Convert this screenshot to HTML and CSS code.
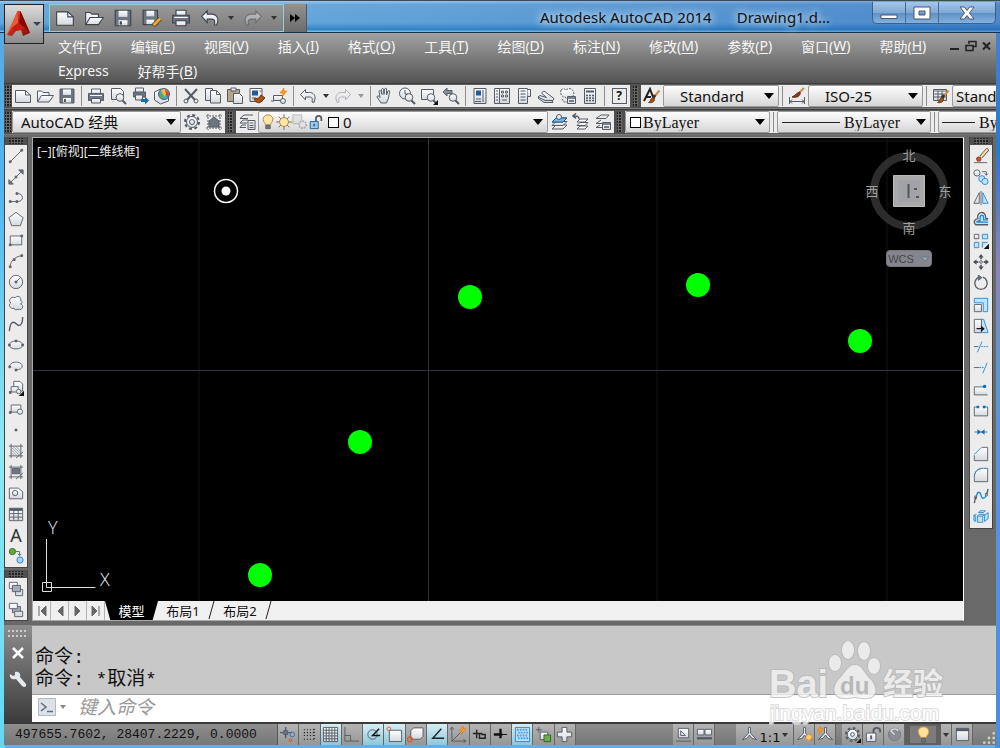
FILE: index.html
```html
<!DOCTYPE html>
<html lang="zh-CN">
<head>
<meta charset="utf-8">
<title>Autodesk AutoCAD 2014 - Drawing1.dwg</title>
<link rel="stylesheet" href="styles.css">
</head>
<body>
<svg class="sprite" aria-hidden="true">
  <defs>
    <linearGradient id="face" x1="0" y1="0" x2="0" y2="1"><stop offset="0" stop-color="#fff"/><stop offset="1" stop-color="#d4d8de"/></linearGradient>
    <linearGradient id="red" x1="0" y1="0" x2="1" y2="1"><stop offset="0" stop-color="#f04a30"/><stop offset="1" stop-color="#8a0c06"/></linearGradient>
  </defs>
  <symbol id="new" viewBox="0 0 18 18"><path class="f" d="M1.500 3.500h10l5 4.500v7.500h-15z"/><path d="M11.500 3.500v4.500h5"/></symbol>
  <symbol id="open" viewBox="0 0 18 18"><path class="f" d="M1.500 15v-11h4l1.500 1.500h6v3"/><path class="f" d="M1.500 15l4-6.500h12l-4.500 6.500z"/></symbol>
  <symbol id="save" viewBox="0 0 18 18"><path class="s" d="M2 2h14v14h-14z"/><path class="f n" d="M5 2.500h8v5.500h-8z"/><path class="f n" d="M5 11h8v4.500h-8z"/><path d="M7 12v3" stroke-width="2"/></symbol>
  <symbol id="saveas" viewBox="0 0 18 18"><path class="s" d="M1 2h13v13h-13z"/><path class="f n" d="M4 2.500h7v5h-7z"/><path class="f n" d="M4 10.500h7v4h-7z"/><path d="M10 16l6.500-6.500" stroke="#5a4a20" stroke-width="4"/><path d="M10.500 15.500l6-6" stroke="#f0a830" stroke-width="2.500"/></symbol>
  <symbol id="print" viewBox="0 0 18 18"><path class="f" d="M4.500 7v-5h9v5"/><path class="s" d="M1.500 6.500h15v7h-15z"/><path d="M3 8.500h12" stroke="#fff"/><path class="f" d="M4.500 11.500h9v4.500h-9z"/></symbol>
  <symbol id="undo" viewBox="0 0 18 18"><path class="f" d="M1.500 7.500l5-5v3h4c4 0 6 3 5.500 6.500l-1 3.500c-.5 0-1 0-2-.5.500-3 .5-5-2.500-5h-4v3z"/></symbol>
  <symbol id="redo" viewBox="0 0 18 18"><path class="f" d="M16.500 7.500l-5-5v3h-4c-4 0-6 3-5.500 6.500l1 3.500c.5 0 1 0 2-.5-.5-3-.5-5 2.500-5h4v3z"/></symbol>
  <symbol id="layers" viewBox="0 0 18 18"><path class="f" d="M2 16l4-4h11l-4 4z"/><path class="f" d="M2 12.500l4-4h11l-4 4z"/><path class="f" d="M2 9l4-4h11l-4 4z"/></symbol>
  <symbol id="lens" viewBox="0 0 18 18"><circle class="f" cx="11" cy="10.500" r="3.800"/><path d="M13.500 13.500l3.500 3.500" stroke-width="2"/></symbol>
  <symbol id="brush" viewBox="0 0 18 18"><path d="M16.500 3.500l-5 6" stroke="#d08a48" stroke-width="2"/><path d="M12 8l-2 3" stroke="#333" stroke-width="3"/><path d="M11.500 11.500c0 4-3 4.500-6 4 2-1 2-3.500 4-5z" fill="#a95416" stroke="#6e330c"/></symbol>
  <symbol id="person" viewBox="0 0 18 18"><path class="f" d="M8 1.500h2v6l6.500 7-5-1.500-2.500-3.500-2.500 3.500-5 1.500 6.500-7z"/></symbol>
</svg>

<div class="window">
  <header class="titlebar">
    <button class="appbtn" aria-label="应用程序菜单">
      <svg class="logo" viewBox="0 0 24 26"><path fill="url(#red)" d="M10.500 0h3l9.500 22-7 3-2-6-5 1-4 5-5-1z"/><path fill="#f0583a" d="M10.500 0l.5 12-5.500 4-5.500 8z"/><path fill="#8a0804" d="M13.500 0l-1.500 12 6 5 5 5z"/><path fill="#c81d10" d="M11 12l7 5-5 2-4 1-4-3z"/></svg>
      <i class="tri blue"></i>
    </button>
    <div class="qat">
      <button aria-label="新建"><svg class="i"><use href="#new"/></svg></button>
      <button aria-label="打开"><svg class="i"><use href="#open"/></svg></button>
      <button aria-label="保存"><svg class="i"><use href="#save"/></svg></button>
      <button aria-label="另存为"><svg class="i"><use href="#saveas"/></svg></button>
      <button aria-label="打印"><svg class="i"><use href="#print"/></svg></button>
      <button aria-label="放弃"><svg class="i"><use href="#undo"/></svg></button>
      <button class="drop" aria-label="放弃列表"><i class="tri small"></i></button>
      <button aria-label="重做"><svg class="i dim"><use href="#redo"/></svg></button>
      <button class="drop" aria-label="重做列表"><i class="tri small"></i></button>
    </div>
    <button class="qatmore" aria-label="更多"><i></i><i></i></button>
    <h1 class="title"><span>Autodesk AutoCAD 2014</span><span>Drawing1.d...</span></h1>
    <div class="winbtns">
      <button aria-label="最小化"><svg viewBox="0 0 18 14"><path class="wb" d="M1 9h16v3.500h-16z"/></svg></button>
      <button aria-label="最大化"><svg viewBox="0 0 18 14"><path class="wb" fill-rule="evenodd" d="M1 1h16v12h-16zM6 5v4h6v-4z"/></svg></button>
      <button class="close" aria-label="关闭"><svg viewBox="0 0 18 14"><path class="wb" d="M2 1h4.500l2.500 3.500 2.500-3.500h4.500l-4.500 6 4.500 6h-4.500l-2.500-3.500-2.500 3.500h-4.500l4.500-6z"/></svg></button>
    </div>
  </header>

  <div class="menubar">
    <nav class="menus">
      <button>文件(<u>F</u>)</button><button>编辑(<u>E</u>)</button><button>视图(<u>V</u>)</button><button>插入(<u>I</u>)</button><button>格式(<u>O</u>)</button><button>工具(<u>T</u>)</button><button>绘图(<u>D</u>)</button><button>标注(<u>N</u>)</button><button>修改(<u>M</u>)</button><button>参数(<u>P</u>)</button><button>窗口(<u>W</u>)</button><button>帮助(<u>H</u>)</button><button>E<u>x</u>press</button><button>好帮手(<u>B</u>)</button>
    </nav>
    <div class="docbtns">
      <button aria-label="最小化文档"><svg viewBox="0 0 12 12"><path d="M1 9h9" stroke-width="2"/></svg></button>
      <button aria-label="还原文档"><svg viewBox="0 0 12 12"><path d="M4 4v-2.500h7v5h-3M1 5.500h7v5h-7zM4 1.500h7M1 5.500h7" stroke-width="1.500"/></svg></button>
      <button aria-label="关闭文档"><svg viewBox="0 0 12 12"><path d="M2 2.500l7 7M9 2.500l-7 7" stroke-width="2"/></svg></button>
    </div>
  </div>

  <div class="toolrow">
    <span class="grip"></span>
    <div class="bar">
      <button aria-label="新建"><svg class="i"><use href="#new"/></svg></button>
      <button aria-label="打开"><svg class="i"><use href="#open"/></svg></button>
      <button aria-label="保存"><svg class="i"><use href="#save"/></svg></button>
      <span class="sep"></span>
      <button aria-label="打印"><svg class="i"><use href="#print"/></svg></button>
      <button aria-label="预览"><svg class="i" viewBox="0 0 18 18"><path class="f" d="M2.500 1.500h9l3 3v8h-12z"/><path d="M4 12v2.500" stroke-dasharray="1 1"/><use href="#lens"/></svg></button>
      <button aria-label="发布"><svg class="i" viewBox="0 0 18 18"><path class="f" d="M4.500 5v-4h8v4"/><path class="s" d="M2.500 5h12v5h-12z"/><path class="f" d="M4.500 8h7v5h-7z"/><path fill="#1769b5" stroke="none" d="M10 12h4v-2.500l4 4-4 4v-2.500h-4z"/></svg></button>
      <button aria-label="三维打印"><svg class="i" viewBox="0 0 18 18"><path class="f" d="M1.500 5l6-3 8 3v9l-8 3-6-4z"/><circle cx="11" cy="7" r="5.500" fill="#4a9fe0"/><path fill="#f5c02c" stroke="none" d="M8 3l4-1 3 3-4 5z"/><path fill="#d9432f" stroke="none" d="M12 2l4 4-1 4-2-2z"/><path fill="#55b04c" stroke="none" d="M7 6l4 2-1 4-3-2z"/></svg></button>
      <span class="sep"></span>
      <button aria-label="剪切"><svg class="i" viewBox="0 0 18 18"><path d="M3 2l10 11M15 2l-10 11" stroke-width="2"/><circle cx="4" cy="14" r="2"/><circle cx="14" cy="14" r="2"/></svg></button>
      <button aria-label="复制"><svg class="i" viewBox="0 0 18 18"><path class="f" d="M1.500 1.500h7v12h-7z"/><path class="f" d="M6.500 3.500h6l4 4v8.500h-10z"/><path d="M12.500 3.500v4h4"/></svg></button>
      <button aria-label="粘贴"><svg class="i" viewBox="0 0 18 18"><path fill="#b5a58a" d="M1.500 2.500h12v12h-12z"/><path class="f" d="M5 1h5v3h-5z"/><path class="f" d="M7.500 6.500h6l3 3v7h-9z"/></svg></button>
      <button aria-label="特性匹配"><svg class="i" viewBox="0 0 18 18"><path class="f" d="M2 1.500h12v13h-12z"/><path fill="#1f5b94" stroke="none" d="M4 3.500h6v5h-6z"/><path d="M11.500 4h2M4 11h4"/><path fill="#a95416" stroke="#6e330c" d="M6 12l5-1 2-3 4 3-3 3c-3 3-6 2-8-2z"/></svg></button>
      <button aria-label="块编辑器"><svg class="i" viewBox="0 0 18 18"><path class="f" d="M3.500 8.500h9v5h-9z"/><circle class="f" cx="13" cy="14" r="2.500"/><path d="M1 14h3"/><path fill="#ff9c1a" stroke="#d87400" stroke-width=".5" d="M14 1l-4 5h3l-1 4 5-6h-3z"/></svg></button>
      <span class="sep"></span>
      <button aria-label="放弃"><svg class="i"><use href="#undo"/></svg></button>
      <button class="drop" aria-label="放弃列表"><i class="tri small"></i></button>
      <button aria-label="重做"><svg class="i dim"><use href="#redo"/></svg></button>
      <button class="drop" aria-label="重做列表"><i class="tri small pale"></i></button>
      <span class="sep"></span>
      <button aria-label="平移"><svg class="i" viewBox="0 0 18 18"><path class="f" d="M5 16l-4-6c0-1.500 1.500-1.500 3 .5l-1-6c0-1.500 1.500-1.500 2 0l1 3-.5-5c.5-1.500 2-1.500 2 0l.5 5 .5-5.500c.5-1 2-1 2 0v6l1.500-4c1-1 2-.5 1.500 1l-1 6-2 5z"/></svg></button>
      <button aria-label="实时缩放"><svg class="i" viewBox="0 0 18 18"><circle class="f" cx="7" cy="6.500" r="5.500"/><path d="M7 3v4h3"/><use href="#lens"/></svg></button>
      <button aria-label="窗口缩放"><svg class="i" viewBox="0 0 18 18"><path class="f" d="M1.500 2.500h12v10h-12z"/><use href="#lens"/><path d="M18 13v5h-5z" fill="#111" stroke="none"/></svg></button>
      <button aria-label="缩放上一个"><svg class="i" viewBox="0 0 18 18"><path fill="#8a9099" d="M1 5l4-4v2.500h5v3h-5v2.500z"/><use href="#lens"/></svg></button>
      <span class="sep"></span>
      <button aria-label="特性"><svg class="i" viewBox="0 0 18 18"><path class="f" d="M3 1.500h12v15h-12z"/><path fill="#1f5b94" stroke="none" d="M5 3.500h5v5h-5z"/><path d="M12 3v12M5 12h5M4 14.500h6"/></svg></button>
      <button aria-label="设计中心"><svg class="i" viewBox="0 0 18 18"><path class="f" d="M1.500 1.500h15v15h-15zM6.500 2v14"/><path d="M3 4h2M3 7h2M3 10h2M3 13h2M8.500 4h2v2h-2zM12.500 4h2v2h-2zM8.500 8h2v2h-2zM12.500 8h2v2h-2zM9 13h5"/></svg></button>
      <button aria-label="工具选项板"><svg class="i" viewBox="0 0 18 18"><path class="f" d="M3.500 1.500h9v15h-9z"/><path class="f" d="M12.500 2.500h3v7h-3"/><path d="M5.500 4h5M5.500 7h5M5.500 10h5M5.500 13h5"/></svg></button>
      <button aria-label="图纸集"><svg class="i" viewBox="0 0 18 18"><path class="f" d="M1 11l6 4.500h9l-2-3h-5l-5-3z"/><path class="f" d="M1 10l7 3.500h8l1-2-10-7.500-2.500 2 5 4.500-6.500-2z"/></svg></button>
      <button aria-label="标记集"><svg class="i" viewBox="0 0 18 18"><path class="f" stroke-dasharray="2 1" d="M2 3c2-2 4-1 5 0 2-2 6-2 7 1 2 3 0 6-2 6-2 3-5 2-6 0-4 0-5-4-4-7zM3 12l2 3h3"/><path class="f" d="M8.500 9.500h8v7h-8z"/><path d="M9 11h8M10 14h5" stroke-width="1.500"/></svg></button>
      <button aria-label="计算器"><svg class="i" viewBox="0 0 18 18"><path class="f" d="M3.500 1.500h11v15h-11z"/><path d="M5 4.500h8" stroke-width="2"/><path stroke-width="1.500" stroke-dasharray="2 1" d="M5 8.500h8M5 11h8M5 13.500h8"/></svg></button>
      <span class="sep"></span>
      <button aria-label="帮助"><span class="help">?</span></button>
    </div>
    <span class="grip wide"></span>
    <div class="bar grow">
      <button aria-label="文字样式"><svg class="i" viewBox="0 0 18 18"><path d="M1 14l6-12 3 8M3 10h5" stroke="#222" stroke-width="2"/><use href="#brush"/></svg></button>
      <span class="combo std"><select aria-label="文字样式"><option>Standard</option></select></span>
      <span class="sep"></span>
      <button aria-label="标注样式"><svg class="i" viewBox="0 0 18 18"><path d="M1.500 10v7M16.500 10v7M1.500 14.500h15M4 12.500l-2 2 2 2M14 12.500l2 2-2 2"/><path d="M16 1l-6 6" stroke="#d08a48" stroke-width="2"/><path d="M12 5c1 4-3 6-8 5 3-1 4-4 8-5z" fill="#8c3d17" stroke="#5d2a10"/></svg></button>
      <span class="combo iso"><select aria-label="标注样式"><option>ISO-25</option></select></span>
      <span class="sep"></span>
      <button aria-label="表格样式"><svg class="i" viewBox="0 0 18 18"><path class="f" d="M1.500 2.500h13v11h-13z"/><path d="M2 4h12M2 7h12M2 10h12M6 4v9M10 4v9"/><use href="#brush"/></svg></button>
      <span class="combo cut"><select aria-label="表格样式"><option>Standard</option></select></span>
    </div>
  </div>

  <div class="toolrow">
    <span class="grip"></span>
    <div class="bar">
      <span class="combo ws"><select aria-label="工作空间"><option>AutoCAD 经典</option></select></span>
      <button aria-label="工作空间设置"><svg class="i" viewBox="0 0 18 18"><circle cx="9" cy="9" r="7" stroke-width="2" stroke-dasharray="3 2.500"/><circle class="f" cx="9" cy="9" r="5.500"/><circle cx="9" cy="9" r="2.500"/></svg></button>
      <button aria-label="我的工作空间"><svg class="i" viewBox="0 0 18 18"><path d="M1 3h16M1 15h16M3 1v16M15 1v16" stroke-dasharray="2 1"/><path class="s" d="M4 14v-6l5-4 5 4v6z"/></svg></button>
    </div>
    <span class="grip wide"></span>
    <div class="bar">
      <button aria-label="图层特性"><svg class="i" viewBox="0 0 18 18"><path d="M15 2h-9l-4 3.500h8M10 7h-5l-3 3h7M8 12h-4l-2 2.500h6M2 5.500h4"/><path class="f" d="M10 7.500h7v9h-7z"/><path d="M11.500 10h4M11.500 12.500h4M11.500 14.500h4"/></svg></button>
      <span class="combo layer">
        <svg class="i" viewBox="0 0 18 18"><path d="M6 12c0-2-2.500-3-2.500-6a5.500 5 0 0 1 11 0c0 3-2.500 4-2.500 6z" fill="#ffe6a4" stroke="#a8823a"/><path class="s" d="M6.500 13h5v3.500h-5z"/></svg>
        <svg class="i" viewBox="0 0 18 18"><path d="M9 0v18M0 9h18M3 3l12 12M15 3l-12 12" stroke="#6d675a"/><circle cx="9" cy="9" r="5" fill="#ffe6a4" stroke="#a8823a"/></svg>
        <svg class="i dim" viewBox="0 0 18 18"><path d="M1 1h10v10h-10z" fill="#ccc"/><circle cx="12" cy="12" r="4" fill="#ddd" stroke-width="2" stroke-dasharray="2 1"/></svg>
        <svg class="i" viewBox="0 0 18 18"><path d="M9 8v-3c0-4 6-4 6 0v3" stroke-width="2"/><path fill="#9bcdf2" stroke="#1d5788" d="M2.500 8.500h9v8h-9z"/><path d="M7 11v3" stroke-width="2"/></svg>
        <i class="swatch"></i>
        <select aria-label="图层"><option>0</option></select>
      </span>
      <button aria-label="置为当前"><svg class="i" viewBox="0 0 18 18"><use href="#layers"/><path d="M2 9l4-4h11l-4 4z" fill="#78b9ea" stroke="#1d5788"/><circle class="f" cx="9" cy="4" r="2.500"/></svg></button>
      <button aria-label="上一个图层"><svg class="i" viewBox="0 0 18 18"><path d="M5 16l3-3h8l-3 3zM5 12.500l3-3h8l-3 3zM5 9l3-3h8l-3 3z" fill="#fff"/><path d="M7 6c0-3-2-3-5-3M4 .5l-3 2.500 3 2.500" stroke-width="1.500"/></svg></button>
      <button aria-label="图层状态"><svg class="i" viewBox="0 0 18 18"><path d="M15 2h-8l-5 3.500h10zM7 7l-5 3.500h6M6 12l-4 2.500h6"/><path class="f" d="M8.500 9.500h8v7h-8z"/><path d="M9 11h8M10 14h5" stroke-width="1.500"/></svg></button>
    </div>
    <span class="grip wide"></span>
    <div class="bar grow serif">
      <span class="combo color"><i class="swatch"></i><select aria-label="颜色"><option>ByLayer</option></select></span>
      <span class="sep"></span>
      <span class="combo ltype"><i class="line"></i><select aria-label="线型"><option>ByLayer</option></select></span>
      <span class="sep"></span>
      <span class="combo cut"><i class="line short"></i><select aria-label="线宽"><option>ByLayer</option></select></span>
    </div>
  </div>

  <main class="work">
    <aside class="side">
      <div class="palette grow">
        <span class="hgrip"></span>
        <button aria-label="直线"><svg class="i" viewBox="0 0 18 18"><path d="M3 15l12-12"/><path class="s" d="M1.500 14.500h2v2h-2zM14.500 1.500h2v2h-2z"/></svg></button>
        <button aria-label="构造线"><svg class="i" viewBox="0 0 18 18"><path d="M3 15l12-12"/><path class="s" d="M1 12v5h5zM17 6v-5h-5zM8 8h2v2h-2z"/></svg></button>
        <button aria-label="多段线"><svg class="i" viewBox="0 0 18 18"><path d="M2 13h9c7 0 7-9 0-9"/><path class="s" d="M1.500 12h2v2h-2zM9 12h2v2h-2zM9 3h2v2h-2z"/></svg></button>
        <button aria-label="多边形"><svg class="i" viewBox="0 0 18 18"><path class="f" d="M9 1.500l8 6-3 9h-10l-3-9z"/></svg></button>
        <button aria-label="矩形"><svg class="i" viewBox="0 0 18 18"><path class="f" d="M2.500 4.500h13v10h-13z"/><path class="s" d="M1.500 13.500h2v2h-2zM14.500 3.500h2v2h-2z"/></svg></button>
        <button aria-label="圆弧"><svg class="i" viewBox="0 0 18 18"><path d="M2 16c1-7 5-12 14-13"/><path class="s" d="M1.500 14.500h2v2h-2zM6 6.500h2v2h-2zM14.500 2h2v2h-2z"/></svg></button>
        <button aria-label="圆"><svg class="i" viewBox="0 0 18 18"><circle class="f" cx="9" cy="9" r="7.500"/><path d="M9 9l5-5"/><path class="s" d="M8 8h2v2h-2z"/></svg></button>
        <button aria-label="修订云线"><svg class="i" viewBox="0 0 18 18"><path class="f" d="M3 9c-3-3 0-8 5-6 2-3 8-1 6 3 3 1 2 4 0 4 5 2 2 8-3 6-1 1-4 1-4-1-5 1-7-4-4-6z"/></svg></button>
        <button aria-label="样条曲线"><svg class="i" viewBox="0 0 18 18"><path d="M1.500 17c1-12 5-11 8-8 4 4 7 0 7-8" stroke-width="1.500"/></svg></button>
        <button aria-label="椭圆"><svg class="i" viewBox="0 0 18 18"><ellipse class="f" cx="9" cy="9" rx="7.500" ry="4.500"/><path class="s" d="M.500 8h2v2h-2zM15.500 8h2v2h-2zM8 3.500h2v2h-2z"/></svg></button>
        <button aria-label="椭圆弧"><svg class="i" viewBox="0 0 18 18"><path class="f" d="M2 10c-1-7 14-7 14-1 0 3-3 4-7 4.500"/><path class="s" d="M1 9h2v2h-2zM8 12.500h2v2h-2z"/></svg></button>
        <button aria-label="插入块"><svg class="i" viewBox="0 0 18 18"><path class="f" d="M6.500 1.500h7l3 3v8h-10z"/><path class="f" d="M3.500 7.500h8v6h-8z"/><circle class="f" cx="12" cy="13" r="2.500"/><path d="M18 12v6h-6z" fill="#111" stroke="none"/><path class="s" d="M1.500 13h2v2h-2z"/></svg></button>
        <button aria-label="创建块"><svg class="i" viewBox="0 0 18 18"><path class="f" d="M3.500 4.500h11v8h-11z"/><circle class="f" cx="13.500" cy="12" r="3"/><path class="s" d="M1.500 12h2v2h-2z"/></svg></button>
        <button aria-label="点"><svg class="i" viewBox="0 0 18 18"><path class="s" d="M8 8h2v2h-2z"/></svg></button>
        <button aria-label="图案填充"><svg class="i" viewBox="0 0 18 18"><path d="M1 3.500h16M1 14.500h16M3.500 1v16M14.500 1v16"/><path d="M4 5l9 9M4 8l6 6M4 11l3 3M6 4l8 8M9 4l5 5" stroke-width=".6"/><path d="M9 17l8-7"/></svg></button>
        <button aria-label="渐变色"><svg class="i" viewBox="0 0 18 18"><path d="M1 3.500h16M1 14.500h16M3.500 1v16M14.500 1v16"/><path class="s" d="M5 5h8v6h-8z"/><path d="M9 17l8-7"/></svg></button>
        <button aria-label="面域"><svg class="i" viewBox="0 0 18 18"><path class="f" d="M1.500 3.500h10l5 4v8h-15z"/><circle class="f" cx="8" cy="9" r="3"/></svg></button>
        <button aria-label="表格"><svg class="i" viewBox="0 0 18 18"><path class="f" d="M1.500 2.500h15v14h-15z"/><path d="M2 4h14" stroke-width="3"/><path d="M2 8.500h14M2 12.500h14M6.500 4v12M11.500 4v12"/></svg></button>
        <button aria-label="多行文字"><span class="mtext">A</span></button>
        <button aria-label="添加选定对象"><svg class="i" viewBox="0 0 18 18"><circle cx="5" cy="4" r="3.500" fill="#5fae3c" stroke="#2d6a18"/><circle cx="13.500" cy="13.500" r="3.500" fill="#a4d4f6" stroke="#2b76b8"/><path d="M9 4h4v4M11 6.500l2 2 2-2"/></svg></button>
      </div>
      <div class="palette order">
        <span class="hgrip"></span>
        <button aria-label="前置"><svg class="i" viewBox="0 0 18 18"><path class="f" d="M1.500 1.500h9v7h-9zM8.500 9.500h8v7h-8z"/><path fill="#a3abb8" d="M5 5h9v7h-9z"/></svg></button>
        <button aria-label="后置"><svg class="i" viewBox="0 0 18 18"><path fill="#a3abb8" d="M5 5h9v7h-9z"/><path class="f" d="M1.500 1.500h9v6h-9zM7.500 10.500h9v6h-9z"/></svg></button>
      </div>
    </aside>

    <section class="drawing">
      <div class="viewport">
        <svg class="model" aria-label="绘图区">
          <path class="grid" d="M166 0v464M624 0v464M854 0v464M0 3h2000"/>
          <path class="axis" d="M395.500 0v464M0 232.500h2000"/>
          <circle cx="193" cy="53" r="11.500" fill="none" stroke="#fff" stroke-width="1.500"/><circle cx="193" cy="53" r="4.500" fill="#fff"/>
          <g fill="#0f0"><circle cx="437" cy="159" r="12"/><circle cx="665" cy="147" r="12"/><circle cx="827" cy="203" r="12"/><circle cx="327" cy="304" r="12"/><circle cx="227" cy="437" r="12"/></g>
          <path fill="none" stroke="#ddd" d="M9.500 444.500h9v9h-9zM13.500 401v48.500h49"/>
          <text class="ucs" x="15" y="396">Y</text><text class="ucs" x="67" y="448">X</text>
        </svg>
        <p class="vplabel">[−][俯视][二维线框]</p>
        <div class="viewcube">
          <svg viewBox="0 0 90 90"><circle cx="45" cy="45" r="35" fill="none" stroke="#2c2c2c" stroke-width="8"/><path d="M29.500 29.500h31v31h-31z" fill="#a9a9a9" stroke="#bbb"/><path d="M34 34h22v22h-22z" fill="#a2a3a8"/><path d="M44.500 38v14M50 43h3M52 51h3" stroke="#555" stroke-width="2"/>
          <text x="45" y="14">北</text><text x="45" y="87">南</text><text x="8" y="50">西</text><text x="81" y="50">东</text></svg>
          <button class="wcs">WCS<svg viewBox="0 0 10 6"><path d="M1 1h8l-4 4z" fill="#9aa3b0" stroke="#6d7888"/></svg></button>
        </div>
      </div>
      <div class="tabs">
        <div class="tabnav">
          <button aria-label="第一个"><svg viewBox="0 0 12 12"><path d="M3 1v10M10 1v10l-5-5z"/></svg></button>
          <button aria-label="上一个"><svg viewBox="0 0 12 12"><path d="M9 1v10l-5-5z"/></svg></button>
          <button aria-label="下一个"><svg viewBox="0 0 12 12"><path d="M3 1v10l5-5z"/></svg></button>
          <button aria-label="最后一个"><svg viewBox="0 0 12 12"><path d="M9 1v10M2 1v10l5-5z"/></svg></button>
        </div>
        <button class="tab active">模型</button>
        <button class="tab">布局1</button>
        <svg class="slash" viewBox="0 0 7 18"><path d="M6 0l-5 18"/></svg>
        <button class="tab">布局2</button>
        <svg class="slash" viewBox="0 0 7 18"><path d="M6 0l-5 18"/></svg>
      </div>
    </section>

    <aside class="side right">
      <div class="palette modify">
        <span class="hgrip"></span>
        <button aria-label="删除"><svg class="i" viewBox="0 0 18 18"><path d="M1 16.500h15"/><path d="M17 1l-8 9" stroke="#444" stroke-width="4"/><path d="M16.500 1.500l-7.500 8.500" stroke="#ffe0a0" stroke-width="2.500"/><circle cx="6.500" cy="12.500" r="2.500" fill="#d8512e" stroke="#803018"/></svg></button>
        <button aria-label="复制"><svg class="i" viewBox="0 0 18 18"><circle class="f" cx="4.500" cy="4.500" r="3.500"/><path d="M10 3h5v4M13 5l2 2 2-2"/><g class="b"><circle cx="10" cy="11" r="3.500"/><circle cx="13.500" cy="14" r="3.500"/></g></svg></button>
        <button aria-label="镜像"><svg class="i" viewBox="0 0 18 18"><path class="f" d="M7 3v12h-6z"/><path class="b" d="M11 3v12h6z"/><path d="M9 1v16"/></svg></button>
        <button aria-label="偏移"><svg class="i" viewBox="0 0 18 18"><path class="f" d="M17 15.500h-14c-3-3-1-7 2.500-7-2-8 9-10 9 0h2.500" stroke-width="1.500"/><path class="b" d="M17 12.500h-12c-1.500 0-1-1.500 3-1.500v-4c0-3 4-3 4 0v3h5" stroke-width="1.500"/></svg></button>
        <button aria-label="阵列"><svg class="i" viewBox="0 0 18 18"><path class="f" d="M1.500 1.500h5v5h-5z"/><path class="b" d="M10.500 1.500h6v5h-6zM1.500 10.500h5v6h-5zM10.500 16.500v-6h6"/><path d="M18 12v6h-6z" fill="#111" stroke="none"/></svg></button>
        <button aria-label="移动"><svg class="i" viewBox="0 0 18 18"><path fill="#49505a" stroke="none" d="M9 0l3 4h-6zM9 18l3-4h-6zM0 9l4-3v6zM18 9l-4-3v6z"/><path d="M9 3v3M9 12v3M3 9h3M12 9h3" stroke-width="2"/><circle cx="9" cy="9" r="1.500"/></svg></button>
        <button aria-label="旋转"><svg class="i" viewBox="0 0 18 18"><path d="M7 2.500a7 7 0 1 0 4 0" stroke-width="1.500"/><path class="s" d="M6 0l4 3-4 3z"/></svg></button>
        <button aria-label="缩放"><svg class="i" viewBox="0 0 18 18"><path class="b" d="M1.500 1.500h15v15h-5v-10h-10z"/><path class="f" d="M1.500 8.500h8v8h-8z"/></svg></button>
        <button aria-label="拉伸"><svg class="i" viewBox="0 0 18 18"><path class="b" d="M9 1.500h3l5 15h-7z"/><path class="f" d="M1.500 1.500h8v15h-8z"/><path d="M4 12h7M9 9.500l3 2.500-3 2.500" stroke="#111" stroke-width="1.500"/></svg></button>
        <button aria-label="修剪"><svg class="i" viewBox="0 0 18 18"><path d="M1 8.500h5"/><path class="b" d="M5 15l5-12"/><path class="b" stroke-dasharray="2 1" d="M9 8.500h8"/></svg></button>
        <button aria-label="延伸"><svg class="i" viewBox="0 0 18 18"><path d="M1 8.500h6"/><path class="b" d="M11 15l5-12"/><path class="b" stroke-dasharray="2 1" d="M7 8.500h6"/></svg></button>
        <button aria-label="打断于点"><svg class="i" viewBox="0 0 18 18"><path class="f" d="M16.500 14.500h-15v-9h12"/><circle cx="13" cy="5" r="2" fill="#0070c8" stroke="none"/></svg></button>
        <button aria-label="打断"><svg class="i" viewBox="0 0 18 18"><path class="f" d="M5 4.500h-3.500v10h15v-10h-3.500"/><path fill="#0070c8" stroke="none" d="M4 3h3v3h-3zM11 3h3v3h-3z"/></svg></button>
        <button aria-label="合并"><svg class="i" viewBox="0 0 18 18"><path d="M2 9h14"/><path fill="#0070c8" stroke="none" d="M5 6l4 3-4 3zM13 6l-4 3 4 3z"/></svg></button>
        <button aria-label="倒角"><svg class="i" viewBox="0 0 18 18"><path class="f" d="M10 1.500h6.500v15h-15v-6"/><path class="b" d="M1.500 9.500l8-8"/></svg></button>
        <button aria-label="圆角"><svg class="i" viewBox="0 0 18 18"><path class="f" d="M12 1.500h4.500v15h-15v-5c0-6 4-10 10-10"/><path stroke="#2687d3" d="M1.500 11c0-6 4-9.500 10-9.500"/></svg></button>
        <button aria-label="光顺曲线"><svg class="i" viewBox="0 0 18 18"><path d="M1.500 17l1.500-7M17 1l-1.500 6" stroke-width="1.500"/><path d="M2 9h2v3h-2zM14 6h2v3h-2z"/><path stroke="#2687d3" stroke-width="1.500" d="M4 9c1-6 4-5 5-1 1 5 4 4 5.500 1"/></svg></button>
        <button aria-label="分解"><svg class="i" viewBox="0 0 18 18"><path class="b" d="M5 8h6v7h-6zM6 4l2-2h6l-2 2zM13 7l4-3v7l-4 3zM1 7l3-1M1 7v6l2 1v-6zM5 8l2-2h6l-2 2"/></svg></button>
      </div>
    </aside>
  </main>

  <section class="command">
    <div class="cmdside">
      <i class="dots"></i>
      <button aria-label="关闭"><svg viewBox="0 0 18 18"><path d="M4 4l10 10M14 4l-10 10" stroke="#fff" stroke-width="2.500"/></svg></button>
      <button aria-label="自定义"><svg viewBox="0 0 18 18"><path d="M1 4l3 2 2-1v-3c4-1 6 2 5 5l6 7c1 3-2 4-4 2l-6-7c-4 1-7-1-6-5z" fill="#e4e7eb"/></svg></button>
    </div>
    <div class="cmdmain">
      <div class="history"><p>命令:</p><p>命令: *取消*</p></div>
      <div class="prompt">
        <button class="prm" aria-label="最近使用的命令"><svg viewBox="0 0 18 18"><path d="M.500.500h17v17h-17z" fill="#dde1e8" stroke="#b3b9c2"/><path d="M3 5l5 4-5 4M9 13.500h6" fill="none" stroke="#626b78" stroke-width="1.500"/></svg><i class="tri small grey"></i></button>
        <input type="text" aria-label="命令行" placeholder="键入命令">
      </div>
    </div>
  </section>

  <footer class="status">
    <output class="coords">497655.7602, 28407.2229, 0.0000</output>
    <div class="toggles">
      <button aria-label="推断约束"><svg class="i" viewBox="0 0 18 18"><path d="M0 7h12M6 1v12" stroke-width="1.500"/><path class="s" d="M4 5h4v4h-4z"/><circle cx="13" cy="9" r="2.500" stroke="#2b76b8"/><circle cx="11" cy="15" r="1.500" stroke="#d8512e"/></svg></button>
      <button aria-label="捕捉"><svg class="i" viewBox="0 0 18 18"><path stroke="#222" stroke-width="1.200" stroke-dasharray="1.200 2" d="M3 4h12M3 7h12M3 10h12M14 3v12M3 14h12"/></svg></button>
      <button class="on" aria-label="栅格"><svg class="i" viewBox="0 0 18 18"><path class="f" d="M1.500 1.500h15v15h-15z"/><path d="M2 4.500h14M2 7.500h14M2 10.500h14M2 13.500h14M4.500 2v14M7.500 2v14M10.500 2v14M13.500 2v14"/></svg></button>
      <button aria-label="正交"><svg class="i" viewBox="0 0 18 18"><path d="M2 1v15h15M2 10h6v6"/></svg></button>
      <button class="on" aria-label="极轴"><svg class="i" viewBox="0 0 18 18"><circle cx="8" cy="9" r="5"/><path d="M16 10h-8l7-7" stroke="#111" stroke-width="1.500"/></svg></button>
      <button class="on" aria-label="对象捕捉"><svg class="i" viewBox="0 0 18 18"><path class="f" d="M3.500 4.500h13v12h-13z"/><circle cx="3" cy="3" r="2" stroke="#e05a28"/></svg></button>
      <button aria-label="三维对象捕捉"><svg class="i" viewBox="0 0 18 18"><path class="f" d="M4 5l3-3h10v9l-3 3h-10z"/><circle cx="3" cy="14" r="2.500" stroke="#e05a28" stroke-width="1.500"/></svg></button>
      <button class="on" aria-label="对象追踪"><svg class="i" viewBox="0 0 18 18"><path d="M13 3l-9 10h12" stroke="#222" stroke-width="1.500"/></svg></button>
      <button aria-label="动态UCS"><svg class="i" viewBox="0 0 18 18"><path d="M2 2v14h15M2 16l9-9M0 4l2-3 2 3M14 14l3 2-3 2"/><path fill="#ff9c1a" stroke="#d87400" stroke-width=".5" d="M14 0l-4 5h3l-1 4 5-6h-3z"/></svg></button>
      <button aria-label="动态输入"><svg class="i" viewBox="0 0 18 18"><path stroke="#222" stroke-width="1.500" d="M2 8h10M6 4v9M9 8v5h6v-4h-4"/></svg></button>
      <button aria-label="线宽"><svg class="i" viewBox="0 0 18 18"><path stroke="#111" stroke-width="2.500" d="M2 9h9M9 3v10"/><path stroke="#111" d="M9 9h7"/></svg></button>
      <button class="on" aria-label="透明度"><svg class="i" viewBox="0 0 18 18"><path class="b" d="M1.500 1.500h15v15h-15z"/><path stroke="#4a9fe0" stroke-dasharray="2 1" stroke-width="2" d="M3 4h12M4 7h11M3 10h12M4 13h11"/></svg></button>
      <button aria-label="快捷特性"><svg class="i" viewBox="0 0 18 18"><path d="M1 4h6M4 1v6"/><path class="f" d="M5.500 6.500h8v8h-8z"/><path fill="#6cad50" stroke="#2d6a18" d="M9.500 9.500h7v7h-7z"/></svg></button>
      <button aria-label="选择循环"><svg class="i" viewBox="0 0 18 18"><path class="f" d="M6.500 1.500h5v5h5v5h-5v5h-5v-5h-5v-5h5z"/></svg></button>
    </div>
    <div class="stgroup push">
      <button aria-label="模型"><svg class="i" viewBox="0 0 18 18"><path class="f" d="M3.500 2.500h11v10h-11z"/><path d="M6 5v5h5zM1 16h16"/></svg></button>
      <button aria-label="布局"><svg class="i" viewBox="0 0 18 18"><path class="f" d="M1.500 3.500h7v6h-7zM9.500 3.500h7v6h-7z"/><path d="M1 13h16" stroke-width="2.500"/></svg></button>
    </div>
    <div class="stgroup gap">
      <button class="scale"><svg class="i"><use href="#person"/></svg><span>1:1</span><i class="tri small"></i></button>
      <button aria-label="注释可见性"><svg class="i" viewBox="0 0 18 18"><use href="#person"/><circle cx="13.500" cy="12" r="3" fill="#ffd070" stroke="#ff8c1a"/></svg></button>
      <button aria-label="自动缩放"><svg class="i" viewBox="0 0 18 18"><use href="#person"/><path fill="#ff9c1a" stroke="#d87400" stroke-width=".5" d="M4 0l-4 5h3l-1 4 5-6h-3z"/></svg></button>
    </div>
    <div class="stgroup last">
      <button aria-label="切换工作空间"><svg class="i" viewBox="0 0 18 18"><circle cx="9" cy="9" r="7" stroke-width="2" stroke-dasharray="3 2.500"/><circle class="f" cx="9" cy="9" r="5.500"/><circle cx="9" cy="9" r="2"/><path d="M18 13v5h-5z" fill="#111" stroke="none"/></svg></button>
      <button aria-label="锁定"><svg class="i" viewBox="0 0 18 18"><path d="M9 8v-3c0-4 7-4 7 0v2" stroke-width="2"/><path class="f" d="M1.500 7.500h10v9h-10z"/><path d="M6.500 10v4" stroke-width="2"/></svg></button>
      <button aria-label="硬件加速"><svg class="i" viewBox="0 0 18 18"><circle cx="9" cy="9" r="6.500" fill="#8a8e94" stroke="#747980"/><path d="M9 9l-4-4M5 5a5 5 0 0 1 8 0" stroke="#ddd" stroke-width="1.500"/></svg></button>
    </div>
    <button class="bulb" aria-label="隔离对象"><svg class="i" viewBox="0 0 18 18"><path d="M6 12c0-2-2.500-3-2.500-6a5.500 5 0 0 1 11 0c0 3-2.500 4-2.500 6z" fill="#ffe29a" stroke="#d9a441"/><path class="s" d="M7 13h4v4h-4z"/></svg></button>
    <div class="stgroup end">
      <button class="drop" aria-label="状态栏菜单"><i class="tri small"></i></button>
      <button aria-label="全屏显示"><svg class="i" viewBox="0 0 18 18"><path class="f" d="M2.500 2.500h13v13h-13z"/><path d="M2 4h14" stroke-width="3"/></svg></button>
    </div>
    <svg class="sizer" viewBox="0 0 12 12"><path d="M9 1h2v2h-2zM5 5h2v2h-2zM9 5h2v2h-2zM1 9h2v2h-2zM5 9h2v2h-2zM9 9h2v2h-2z"/></svg>
  </footer>

  <svg class="mark" viewBox="0 0 180 90" aria-label="Baidu 经验">
    <g class="halo">
      <text class="big" x="0" y="56">Bai</text>
      <ellipse cx="66" cy="22" rx="6" ry="8"/><ellipse cx="79" cy="9" rx="6" ry="9"/><ellipse cx="95" cy="10" rx="6" ry="9"/><ellipse cx="105" cy="25" rx="6" ry="8"/>
      <path d="M86 24c7 0 9 8 14 13 8 7 10 19-2 20-6 1-8-1-12-1s-6 2-12 1c-12-2-10-13-3-20 5-5 8-13 15-13z"/>
      <text class="cn" x="114" y="53">经验</text>
      <text class="url" x="1" y="79">jingyan.baidu.com</text>
    </g>
    <text class="du" x="71" y="53">du</text>
  </svg>
</div>
</body>
</html>
```

FILE: styles.css
```css
* { box-sizing: border-box; }
body { margin: 0; font-family: "Noto Sans", "Noto Sans CJK SC", sans-serif; font-size: 14px; color: #111; }
button, select, input { font: inherit; color: inherit; border: 0; background: none; padding: 0; margin: 0; border-radius: 0; }
button { display: flex; align-items: center; justify-content: center; flex: none; }
p, h1 { margin: 0; }
.sprite { position: absolute; width: 0; height: 0; }

.window {
  position: relative; display: flex; flex-direction: column; height: 100vh; min-height: 500px; overflow: hidden;
  padding: 0 4px 3px 4px;
  background:
    linear-gradient(#5aa8e0, #4fb5f0 25%, #8deaf0 60%, #62d8f5) left / 5px 100% no-repeat,
    linear-gradient(#4a86c8, #2d78c8 20%, #8a86b8 36%, #5a98d4 50%, #4a90d8) right / 5px 100% no-repeat,
    #62aee6;
}

/* shared icon paint */
.i { width: 18px; height: 18px; flex: none; stroke: #555c67; fill: none; stroke-width: 1; display: block; }
.f { fill: url(#face); }
.s { fill: #6d7580; }
.n { stroke: none; }
.b { fill: #c4e2f7; stroke: #2687d3; }
.dim { opacity: .4; }
.tri { width: 0; height: 0; border: 5px solid transparent; border-top: 6px solid #000; border-bottom: 0; }
.tri.small { border-width: 3px; border-top-width: 4px; border-bottom: 0; border-top-color: #333; }
.tri.blue { border-top-color: #34465e; border-width: 4px; border-bottom: 0; }
.tri.pale { border-top-color: #999; }
.tri.grey { border-top-color: #888; }

.titlebar {
  position: relative; z-index: 2; display: flex; align-items: flex-start; height: 33px; flex: none; margin: 0 -4px; padding: 3px 4px 0 49px;
  border-top: 1px solid #3d4a58; border-bottom: 1px solid #17334f;
  background: linear-gradient(90deg, transparent 30%, rgba(30, 80, 170, .35)), linear-gradient(#9cc8ec, #6aa8dc 12%, #62a5da 70%, #2f86c6 92%, #8fc8f0);
}
.appbtn { position: absolute; left: 4px; top: 3px; width: 40px; height: 40px; gap: 2px; border: 1px solid #222; background: linear-gradient(#dcdcdc, #8b8b8b); }
.logo { width: 24px; height: 26px; }
.qat { display: flex; height: 28px; width: 235px; border: 1px solid #8fd2dc; background: linear-gradient(#999, #7c7c7c); }
.qat button { width: 29px; }
.qat .i { width: 20px; height: 20px; stroke: #3b434e; }
.qat .drop { width: 14px; }
.qatmore { width: 23px; height: 28px; background: linear-gradient(#929292, #6c6c6c); border-right: 1px solid #555; }
.qatmore i { border: 4px solid transparent; border-left: 5px solid #000; border-right: 0; }
.title { flex: 1; display: flex; gap: 25px; justify-content: flex-end; align-items: center; height: 25px; padding-right: 42px; font-size: 15px; font-weight: 400; white-space: nowrap; }
.title span { text-shadow: 0 0 8px #d8ecff, 0 0 8px #d8ecff; }
.winbtns { display: flex; margin-top: -2px; height: 22px; border: 1px solid #3f5f85; border-top: 0; border-radius: 0 0 5px 5px; background: linear-gradient(#a6c6e6, #7faad6 50%, #5c8fc8 52%, #83b1de); }
.winbtns button { width: 33px; border-right: 1px solid #4a6c94; }
.winbtns .close { width: 56px; border: 0; }
.winbtns svg { width: 18px; height: 14px; }
.wb { fill: #fff; stroke: #4b5666; }

.menubar { display: flex; justify-content: space-between; flex: none; height: 50px; padding: 0 3px 0 54px; background: linear-gradient(#a2a2a2, #535353); color: #f6f6f6; }
.menus { display: flex; flex-wrap: wrap; column-gap: 29px; flex: 1; align-content: flex-start; }
.menus button { height: 25px; white-space: nowrap; }
.menus u { text-underline-offset: 2px; }
.docbtns { display: flex; gap: 4px; height: 25px; }
.docbtns svg { width: 12px; height: 12px; fill: none; stroke: #222; }

.toolrow { display: flex; align-items: center; height: 26px; flex: none; background: #5c5c5c; border-top: 1px solid #3c3c3c; border-bottom: 1px solid #777; overflow: hidden; }
.grip { align-self: stretch; width: 8px; flex: none; background: radial-gradient(circle at 1px 1px, #222 1px, transparent 1px) 2px 3px / 3px 3px, #686868; border: solid #505050; border-width: 2px 1px; }
.grip.wide { width: 11px; border-width: 2px 3px; }
.bar { display: flex; align-items: center; height: 22px; flex: none; background: #ececec; }
.bar.grow { flex: 1; min-width: 0; overflow: hidden; }
.bar > button { width: 22px; height: 22px; }
.bar > .drop { width: 13px; }
.sep { width: 7px; height: 20px; flex: none; background: linear-gradient(#8d8d8d, #8d8d8d) center / 1px 100% no-repeat; }
.help { width: 15px; height: 16px; border: 1px solid #555c66; font-weight: 700; font-size: 12px; line-height: 14px; text-align: center; }

.combo { position: relative; display: flex; align-items: center; flex: none; height: 22px; border: 1px solid #9a9a9a; border-radius: 2px; background: linear-gradient(#fdfdfd, #d6d6d6); font-size: 15px; }
.combo::after { content: ""; position: absolute; right: 4px; top: 7px; border: 5px solid transparent; border-top: 6px solid #000; border-bottom: 0; pointer-events: none; }
.combo select { appearance: none; flex: 1; min-width: 0; height: 20px; }
.std { width: 116px; padding-left: 16px; }
.iso { width: 115px; padding-left: 16px; }
.ws { width: 169px; padding-left: 8px; }
.cut { width: 116px; padding-left: 3px; }
.layer { width: 290px; padding-left: 1px; }
.layer .i { width: 16px; height: 16px; }
.layer select { padding-left: 2px; }
.serif .combo { font-family: "Liberation Serif", serif; font-size: 16px; }
.swatch { width: 11px; height: 11px; margin: 0 2px 0 4px; border: 1px solid #000; background: #fff; }
.color { width: 145px; }
.ltype { width: 154px; }
.line { width: 58px; height: 1px; margin: 0 4px; background: #222; }
.line.short { width: 33px; margin-left: 0; }

.work { display: flex; flex: 1; min-height: 0; background: #696969; }
.side { display: flex; flex-direction: column; width: 24px; flex: none; gap: 2px; margin: 2px 4px 4px 0; }
.side.right { margin: 2px 3px 0 5px; }
.palette { display: flex; flex-direction: column; background: #ececec; border: 1px solid #444; border-top: 0; }
.palette.grow { flex: 1; min-height: 0; }
.palette button { flex: 1; min-height: 0; width: 22px; }
.palette .i { width: 16px; height: 16px; }
.modify { height: 392px; }
.order button { flex: none; height: 21px; }
.hgrip { height: 8px; flex: none; background: radial-gradient(circle at 1px 1px, #222 1px, transparent 1px) 3px 2px / 3px 3px, #606060; border: solid #505050; border-width: 1px 4px; }
.mtext { font-size: 18px; line-height: 20px; color: #333; }

.drawing { display: flex; flex-direction: column; flex: 1; min-width: 0; margin: 2px 0 4px; border: 1px solid #aaa; border-right-color: #fff; }
.viewport { position: relative; flex: 1; min-height: 0; background: #000; overflow: hidden; color: #eee; }
.model { position: absolute; left: 0; top: 0; width: 100%; height: 100%; }
.grid { stroke: #15151b; }
.axis { stroke: #33333f; }
.ucs { fill: #eee; font-family: "Open Sans", sans-serif; font-size: 18px; font-weight: 300; }
.vplabel { position: absolute; left: 4px; top: 5px; font-size: 12px; line-height: 18px; }
.viewcube { position: absolute; right: 9px; top: 8px; width: 90px; display: flex; flex-direction: column; align-items: center; }
.viewcube > svg { width: 90px; height: 90px; }
.viewcube text { fill: #a0a0a0; font-size: 13px; text-anchor: middle; }
.wcs { width: 46px; height: 17px; margin-top: 14px; gap: 6px; border: 1px solid #777; border-radius: 4px; background: #85858f; color: #444; font: 11px "Liberation Sans", sans-serif; }
.wcs svg { width: 10px; height: 6px; }
.tabs { display: flex; align-items: stretch; height: 19px; flex: none; background: #f0f0f0; }
.tabnav { display: flex; }
.tabnav button { width: 18px; border: 1px solid #b4b4b4; border-width: 0 1px 0 0; }
.tabnav svg { width: 12px; height: 12px; fill: #666; stroke: #666; }
.tab { font-size: 13px; width: 50px; }
.tab.active { width: 53px; background: #000; color: #fff; clip-path: polygon(0 0, 100% 0, 90% 100%, 10% 100%); }
.slash { width: 7px; height: 18px; fill: none; stroke: #222; }

.command { display: flex; height: 97px; flex: none; background: #c8c8c8; border-top: 1px solid #8a8a8a; }
.cmdside { width: 28px; display: flex; flex-direction: column; align-items: center; background: linear-gradient(#8c8c8c, #3c3c3c); gap: 8px; }
.cmdside svg { width: 18px; height: 18px; }
.dots { width: 20px; height: 8px; margin-top: 4px; margin-bottom: -2px; background: radial-gradient(circle at 1px 1px, #ccc 1px, transparent 1px) 0 0 / 4px 5px; }
.cmdmain { display: flex; flex-direction: column; flex: 1; min-width: 0; }
.history { flex: 1; display: flex; flex-direction: column; justify-content: flex-end; padding: 0 3px 3px; font: 19px/22px "Liberation Mono", "Noto Sans CJK SC", monospace; }
.prompt { display: flex; align-items: center; height: 28px; border-top: 1px solid #999; background: #fff; padding: 0 0 3px 6px; gap: 12px; }
.prm { gap: 4px; }
.prm svg { width: 18px; height: 18px; }
.prompt input { flex: 1; min-width: 0; height: 24px; font-size: 19px; font-style: italic; outline: 0; }
.prompt input::placeholder { color: #999; opacity: 1; }

.status { display: flex; align-items: stretch; height: 23px; flex: none; border-top: 2px solid #3b3b3b; background: linear-gradient(#8e8e8e, #777); }
.coords { width: 273px; padding-left: 11px; align-self: center; font: 13px "Liberation Mono", monospace; white-space: nowrap; }
.toggles { display: grid; grid-template-columns: repeat(14, 1fr); width: 299px; flex: none; border-left: 1px solid #555; }
.toggles button, .stgroup button { background: linear-gradient(#b4b4b4, #969696); border-right: 1px solid #666; }
.toggles .on { background: linear-gradient(#d8eef4, #8cc8dc); }
.status .i { width: 17px; height: 17px; }
.stgroup { display: flex; }
.stgroup button { width: 21px; }
.stgroup .scale { width: 58px; gap: 2px; font: 13px/13px "DejaVu Sans", sans-serif; }
.scale span { align-self: flex-end; padding-bottom: 1px; }
.push { margin-left: auto; }
.gap { margin-left: 21px; }
.last { margin-left: 6px; }
.bulb { width: 36px; background: #7c7c7c; border: 3px solid #606060; border-width: 2px 5px; }
.stgroup .drop { width: 11px; }
.sizer { width: 14px; height: 14px; align-self: flex-end; margin-left: 9px; fill: #d8d8c8; }

.mark { position: absolute; right: 51px; bottom: 17px; width: 180px; height: 90px; pointer-events: none; opacity: .8; }
.halo { fill: #f4f4f4; stroke: #b8b8b8; stroke-width: 2; paint-order: stroke; }
.big { font: 700 38px "Liberation Sans", sans-serif; }
.cn { font: 700 30px "Noto Sans CJK SC", sans-serif; }
.url { font: 21px "Liberation Sans", sans-serif; fill: #fff; stroke: #d4d4d4; }
.du { font: 700 24px "Liberation Sans", sans-serif; fill: #b4b4b4; }
```
